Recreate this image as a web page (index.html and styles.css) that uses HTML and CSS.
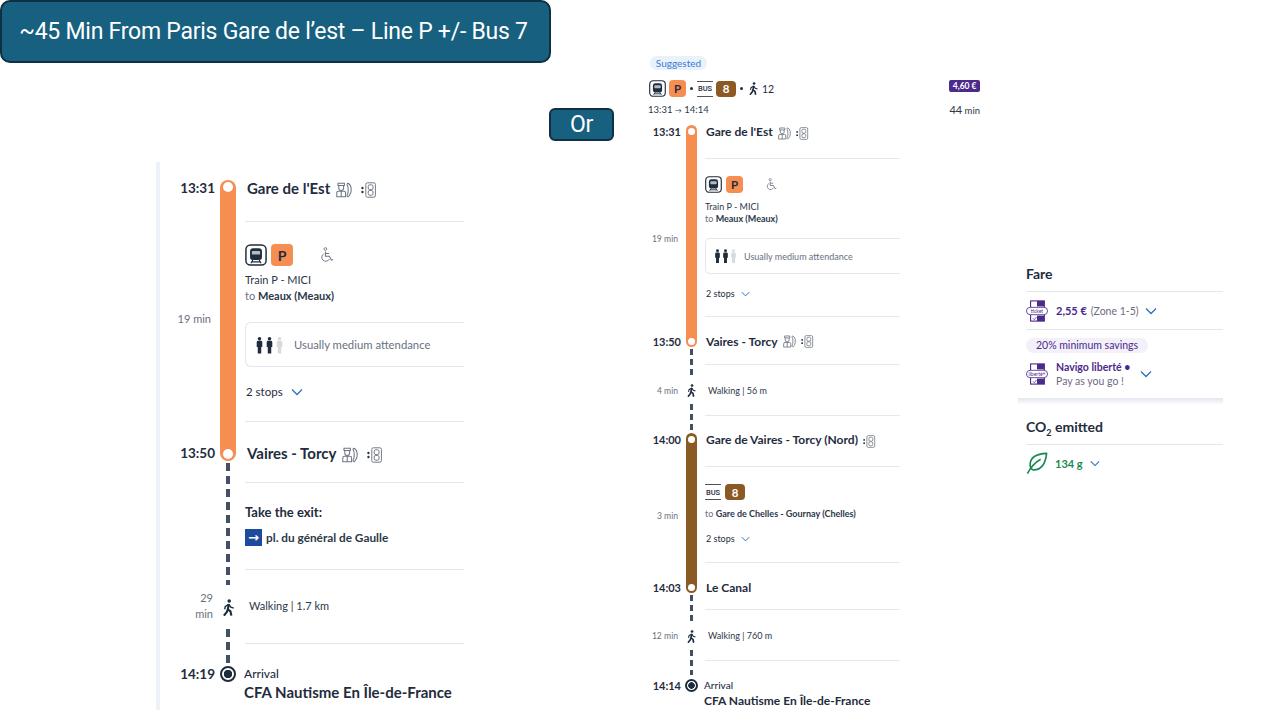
FILE: index.html
```html
<!DOCTYPE html>
<html lang="en">
  <head>
    <meta charset="UTF-8" />
    <title>Paris Gare de l'Est to CFA Nautisme</title>
    <link rel="stylesheet" href="styles.css">
  </head>
  <body>
    <svg class="sprite" xmlns="http://www.w3.org/2000/svg">
      <symbol id="i-train" viewBox="0 0 24 24">
        <rect x="1" y="1" width="22" height="22" rx="5" fill="#fff" stroke="#1f2c3d" stroke-width="1.6"/>
        <path d="M9 4.500h6a3.500 3.500 0 0 1 3.500 3.500v6.500a3 3 0 0 1-3 3h-7a3 3 0 0 1-3-3V8A3.500 3.500 0 0 1 9 4.500z" fill="#1f2c3d"/>
        <rect x="7.500" y="7.500" width="9" height="4" rx="1" fill="#b4bac3"/>
        <path d="M8.500 17.500l-2 3.500M15.500 17.500l2 3.500M7.500 19.500h9" stroke="#1f2c3d" stroke-width="1.300" fill="none"/>
      </symbol>
      <symbol id="i-walk" viewBox="0 0 24 24">
        <circle cx="13" cy="2.800" r="2.500" fill="currentColor"/>
        <path d="M12.500 7L11 14.500l3.800 3 1.200 6M11 14.500L9.500 18.500 5.500 23.500" fill="none" stroke="currentColor" stroke-width="3" stroke-linejoin="round"/>
        <path d="M12.500 7.500L7.500 10.500l-1 4M12.500 7.500l2.800 4 4 1.500" fill="none" stroke="currentColor" stroke-width="2"/>
      </symbol>
      <symbol id="i-staff" viewBox="0 0 20 20">
        <g fill="none" stroke="#6d7480" stroke-width="1.300">
          <path d="M2.500 1.500h8v3h-8zM3.500 4.500v3a3 3 0 0 0 6 0v-3"/>
          <path d="M1 18.500v-5a2 2 0 0 1 2-2h7a2 2 0 0 1 2 2v5zM6.500 11.500v7"/>
          <path d="M15 1.500c3 1.500 4 4.500 4 8s-1 6.500-4 9c-1.500-.5-1.500-2.500-.5-3.500 1-2 1-8 0-10.500-1-1-1-2.500.5-3z"/>
        </g>
      </symbol>
      <symbol id="i-lift" viewBox="0 0 20 20">
        <circle cx="1.800" cy="7.500" r="1.500" fill="#2c3848"/>
        <circle cx="1.800" cy="12.500" r="1.500" fill="#2c3848"/>
        <g fill="none" stroke="#6d7480" stroke-width="1.200">
          <rect x="6" y="1" width="12" height="18" rx="2"/>
          <rect x="9" y="3.500" width="6" height="6" rx="2"/>
          <rect x="9" y="10.500" width="6" height="6" rx="2"/>
        </g>
      </symbol>
      <symbol id="i-wheel" viewBox="0 0 20 20">
        <circle cx="8" cy="2.500" r="1.700" fill="none" stroke="#6d7480" stroke-width="1.100"/>
        <path d="M8 5.500v6h5l2.500 5 2-.8M8 8h4.500" fill="none" stroke="#6d7480" stroke-width="1.300"/>
        <path d="M6 8.500a5 5 0 1 0 7 6.500" fill="none" stroke="#6d7480" stroke-width="1.200"/>
      </symbol>
      <symbol id="i-person" viewBox="0 0 10 24">
        <circle cx="5" cy="3" r="2.500" fill="currentColor"/>
        <path d="M1 8a2 2 0 0 1 2-2h4a2 2 0 0 1 2 2v7H7.500v9h-5v-9H1z" fill="currentColor"/>
      </symbol>
      <symbol id="i-chevron" viewBox="0 0 12 8">
        <path d="M1 1.500l5 5 5-5" fill="none" stroke="#2f6fc0" stroke-width="1.300"/>
      </symbol>
      <symbol id="i-leaf" viewBox="0 0 24 24">
        <path d="M22.500 1.500C12 2 5 5 4.500 13c-.2 3 1 5.500 3 6.500 8 .5 13.500-5 15-18z" fill="none" stroke="#1c8a50" stroke-width="1.800" stroke-linejoin="round"/>
        <path d="M1.500 23.500C5 17 9 12 16 8" fill="none" stroke="#1c8a50" stroke-width="1.800"/>
      </symbol>
    </svg>

    <div class="slide">
      <h1 class="banner banner-title">~45 Min From Paris Gare de l’est – Line P +/- Bus 7</h1>
      <div class="banner banner-or">Or</div>

      <!-- left screenshot -->
      <section class="journey journey-big">
        <div class="leg leg-p">
          <div class="track track-orange"><span class="dot"></span><span class="dot"></span></div>
          <div class="time">13:31</div>
          <div class="cell cell-name ruled">
            <span class="stop-name">Gare de l'Est</span>
            <svg class="icon-staff"><use href="#i-staff"/></svg>
            <svg class="icon-lift"><use href="#i-lift"/></svg>
          </div>
          <div class="time time-span">19 min</div>
          <div class="cell ruled ride">
            <div class="line-badges">
              <svg class="icon-train"><use href="#i-train"/></svg>
              <span class="badge badge-p">P</span>
              <svg class="icon-wheel"><use href="#i-wheel"/></svg>
            </div>
            <div class="ride-text">Train P - MICI<br><span class="to">to</span> <b>Meaux (Meaux)</b></div>
            <div class="attendance">
              <svg class="icon-person"><use href="#i-person"/></svg>
              <svg class="icon-person"><use href="#i-person"/></svg>
              <svg class="icon-person person-off"><use href="#i-person"/></svg>
              <span>Usually medium attendance</span>
            </div>
            <div class="stops">2 stops <svg class="icon-chevron"><use href="#i-chevron"/></svg></div>
          </div>
          <div class="time time-end">13:50</div>
          <div class="cell cell-name cell-end">
            <span class="stop-name">Vaires - Torcy</span>
            <svg class="icon-staff"><use href="#i-staff"/></svg>
            <svg class="icon-lift"><use href="#i-lift"/></svg>
          </div>
        </div>

        <div class="leg leg-walk-exit">
          <div class="track-walk">
            <span class="dashes dashes-a"></span>
            <svg class="icon-walk"><use href="#i-walk"/></svg>
            <span class="dashes dashes-b"></span>
          </div>
          <div class="cell ruled"></div>
          <div class="cell ruled exit">
            <div class="exit-title">Take the exit:</div>
            <div class="exit-way"><span class="exit-arrow">→</span> pl. du général de Gaulle</div>
          </div>
          <div class="time time-span time-walk">29<br>min</div>
          <div class="cell ruled walking">Walking | 1.7 km</div>
        </div>

        <div class="arrival">
          <div class="time">14:19</div>
          <span class="target"></span>
          <div class="arrival-text">
            <div class="arrival-label">Arrival</div>
            <div class="arrival-place">CFA Nautisme En Île-de-France</div>
          </div>
        </div>
      </section>

      <!-- middle screenshot -->
      <section class="journey journey-small">
        <span class="suggested">Suggested</span>
        <div class="summary">
          <svg class="icon-train"><use href="#i-train"/></svg>
          <span class="badge badge-p">P</span>
          <span class="sep"></span>
          <span class="bus-mark">BUS</span>
          <span class="badge badge-8">8</span>
          <span class="sep"></span>
          <svg class="icon-walk-head"><use href="#i-walk"/></svg>
          <span class="walk-min">12</span>
          <span class="price">4,60 €</span>
        </div>
        <div class="hours">
          <span>13:31 <span class="hours-arrow">→</span> 14:14</span>
          <span><b class="total">44</b> min</span>
        </div>

        <div class="leg leg-p">
          <div class="track track-orange"><span class="dot"></span><span class="dot"></span></div>
          <div class="time">13:31</div>
          <div class="cell cell-name ruled">
            <span class="stop-name">Gare de l'Est</span>
            <svg class="icon-staff"><use href="#i-staff"/></svg>
            <svg class="icon-lift"><use href="#i-lift"/></svg>
          </div>
          <div class="time time-span">19 min</div>
          <div class="cell ruled ride">
            <div class="line-badges">
              <svg class="icon-train"><use href="#i-train"/></svg>
              <span class="badge badge-p">P</span>
              <svg class="icon-wheel"><use href="#i-wheel"/></svg>
            </div>
            <div class="ride-text">Train P - MICI<br><span class="to">to</span> <b>Meaux (Meaux)</b></div>
            <div class="attendance">
              <svg class="icon-person"><use href="#i-person"/></svg>
              <svg class="icon-person"><use href="#i-person"/></svg>
              <svg class="icon-person person-off"><use href="#i-person"/></svg>
              <span>Usually medium attendance</span>
            </div>
            <div class="stops">2 stops <svg class="icon-chevron"><use href="#i-chevron"/></svg></div>
          </div>
          <div class="time time-end">13:50</div>
          <div class="cell cell-name cell-end">
            <span class="stop-name">Vaires - Torcy</span>
            <svg class="icon-staff"><use href="#i-staff"/></svg>
            <svg class="icon-lift"><use href="#i-lift"/></svg>
          </div>
        </div>

        <div class="leg leg-walk-a">
          <div class="track-walk">
            <span class="dashes dashes-a"></span>
            <svg class="icon-walk"><use href="#i-walk"/></svg>
            <span class="dashes dashes-b"></span>
          </div>
          <div class="cell ruled"></div>
          <div class="time time-span">4 min</div>
          <div class="cell ruled walking">Walking | 56 m</div>
        </div>

        <div class="leg leg-bus">
          <div class="track track-brown"><span class="dot"></span><span class="dot"></span></div>
          <div class="time">14:00</div>
          <div class="cell cell-name ruled">
            <span class="stop-name">Gare de Vaires - Torcy (Nord)</span>
            <svg class="icon-lift"><use href="#i-lift"/></svg>
          </div>
          <div class="time time-span">3 min</div>
          <div class="cell ruled ride">
            <div class="line-badges">
              <span class="bus-mark">BUS</span>
              <span class="badge badge-8">8</span>
            </div>
            <div class="ride-text"><span class="to">to</span> <b>Gare de Chelles - Gournay (Chelles)</b></div>
            <div class="stops">2 stops <svg class="icon-chevron"><use href="#i-chevron"/></svg></div>
          </div>
          <div class="time time-end">14:03</div>
          <div class="cell cell-name cell-end">
            <span class="stop-name">Le Canal</span>
          </div>
        </div>

        <div class="leg leg-walk-b">
          <div class="track-walk">
            <span class="dashes dashes-a"></span>
            <svg class="icon-walk"><use href="#i-walk"/></svg>
            <span class="dashes dashes-b"></span>
          </div>
          <div class="cell ruled"></div>
          <div class="time time-span">12 min</div>
          <div class="cell ruled walking">Walking | 760 m</div>
        </div>

        <div class="arrival">
          <div class="time">14:14</div>
          <span class="target"></span>
          <div class="arrival-text">
            <div class="arrival-label">Arrival</div>
            <div class="arrival-place">CFA Nautisme En Île-de-France</div>
          </div>
        </div>
      </section>

      <!-- right screenshot -->
      <aside class="fare">
        <h2 class="fare-title">Fare</h2>
        <div class="fare-row fare-ticket">
          <svg class="icon-pass" viewBox="0 0 24 24">
            <rect x="5" y="1" width="15" height="22" fill="none" stroke="#4b2a8a" stroke-width="1.200"/>
            <rect x="12" y="1" width="8" height="6" fill="#4b2a8a"/>
            <rect x="12" y="17" width="8" height="6" fill="#4b2a8a"/>
            <path d="M7.500 20l1.500 1.500 2.500-3" fill="none" stroke="#4b2a8a" stroke-width=".8"/>
            <rect x=".5" y="8" width="23" height="8" rx="4" fill="#fff" stroke="#4b2a8a" stroke-width=".9"/>
            <text x="12" y="14" text-anchor="middle" class="pass-text">ticket</text>
          </svg>
          <b class="fare-price">2,55 €</b>
          <span class="fare-note">(Zone 1-5)</span>
          <svg class="icon-chevron"><use href="#i-chevron"/></svg>
        </div>
        <div class="fare-offer">
          <span class="savings">20% minimum savings</span>
          <div class="fare-row">
            <svg class="icon-pass" viewBox="0 0 24 24">
              <rect x="5" y="1" width="15" height="22" fill="none" stroke="#4b2a8a" stroke-width="1.200"/>
              <rect x="12" y="1" width="8" height="6" fill="#4b2a8a"/>
              <rect x="12" y="17" width="8" height="6" fill="#4b2a8a"/>
              <path d="M7.500 20l1.500 1.500 2.500-3" fill="none" stroke="#4b2a8a" stroke-width=".8"/>
              <rect x=".5" y="8" width="23" height="8" rx="4" fill="#fff" stroke="#4b2a8a" stroke-width=".9"/>
              <text x="12" y="14" text-anchor="middle" class="pass-text">liberté+</text>
            </svg>
            <div class="navigo"><b>Navigo liberté •</b><br><span>Pay as you go !</span></div>
            <svg class="icon-chevron"><use href="#i-chevron"/></svg>
          </div>
        </div>
        <div class="fare-band"></div>
        <h2 class="fare-title co2-title">CO<sub>2</sub> emitted</h2>
        <div class="co2-row">
          <svg class="icon-leaf"><use href="#i-leaf"/></svg>
          <b>134 g</b>
          <svg class="icon-chevron"><use href="#i-chevron"/></svg>
        </div>
      </aside>
    </div>
  </body>
</html>
```

FILE: styles.css
```css
* {
  box-sizing: border-box;
  margin: 0;
  padding: 0;
}
body {
  background: #fff;
  color: #1f2c3d;
  font-family: "Lato", "Liberation Sans", sans-serif;
  overflow: hidden;
}
.sprite {
  display: none;
}
svg {
  display: block;
  flex: none;
}
.slide {
  position: relative;
  width: 1280px;
  height: 720px;
  overflow: hidden;
}

/* slide banners */
.banner {
  position: absolute;
  display: flex;
  align-items: center;
  justify-content: center;
  background: #17607f;
  border: 2px solid #0e2f44;
  color: #fff;
  font-family: "Roboto", "Liberation Sans", sans-serif;
  font-weight: 400;
  font-size: 23px;
  letter-spacing: -0.25px;
}
.banner-title {
  left: 0;
  top: 0;
  width: 551px;
  height: 63px;
  padding-right: 4px;
  border-radius: 10px;
}
.banner-or {
  left: 549px;
  top: 108px;
  width: 65px;
  height: 33px;
  border-radius: 6px;
}

/* the journeys */
.journey {
  position: absolute;
}
.journey-big {
  left: 156px;
  top: 162px;
  width: 308px;
  height: 548px;
  padding-top: 18px;
  border-left: 4px solid #edf1f8;
  --time-w: 60px;
  --line-w: 16px;
  --body-pad: 9px;
  --name: 15px;
  --time: 13.500px;
  --small: 11px;
  --text: 11px;
  --rule: #e3e6ea;
}
.journey-small {
  left: 648px;
  top: 56px;
  width: 332px;
  --time-w: 38px;
  --line-w: 11px;
  --body-pad: 8px;
  --name: 12px;
  --time: 11px;
  --small: 9px;
  --text: 9px;
  --rule: #e6e8ec;
}
.leg {
  display: grid;
  grid-template-columns: var(--time-w) var(--line-w) 1fr;
}
.journey-small .leg {
  width: 252px;
}
.journey-big .leg-p { grid-template-rows: 42px 200px 39px; }
.journey-big .leg-walk-exit { grid-template-rows: 22px 87px 74px 22px; }
.journey-small .leg-p { grid-template-rows: 34px 158px 30px; }
.journey-small .leg-walk-a { grid-template-rows: 18px 51px 17px; }
.journey-small .leg-bus { grid-template-rows: 34px 96px 30px; }
.journey-small .leg-walk-b { grid-template-rows: 17px 51px 16px; }

.track {
  grid-column: 2;
  grid-row: 1 / span 3;
  display: flex;
  flex-direction: column;
  justify-content: space-between;
  align-items: center;
  border-radius: 8px;
  padding: 2px 0;
}
.journey-small .track {
  padding: 3px 0 2px;
}
.track-orange { background: #f68d51; }
.track-brown { background: #8b5a24; }
.dot {
  width: 10px;
  height: 10px;
  border-radius: 50%;
  background: #fff;
}
.journey-small .dot {
  width: 7px;
  height: 7px;
}
.time {
  grid-column: 1;
  padding-right: 5px;
  text-align: right;
  font-size: var(--time);
  font-weight: 700;
  line-height: 16px;
}
.journey-small .time {
  line-height: 12px;
  padding-top: 1px;
}
.time-span {
  align-self: center;
  font-size: var(--small);
  font-weight: 400;
  color: #687180;
}
.journey-big .time-span {
  padding-right: 9px;
  margin-bottom: 6px;
}
.journey-small .time-span {
  padding-right: 8px;
  font-size: 8.600px;
}
.journey-big .time-walk {
  align-self: end;
  margin-bottom: 0;
  padding: 0 7px 22px 0;
}
.time-end {
  align-self: end;
}
.journey-small .time-end {
  line-height: 10px;
}
.cell {
  grid-column: 3;
  margin-left: var(--body-pad);
}
.ruled {
  border-bottom: 1px solid var(--rule);
}
.cell-name {
  display: flex;
  align-items: flex-start;
  padding-left: 2px;
}
.journey-small .cell-name {
  padding-left: 1px;
  padding-top: 1px;
}
.cell-end {
  align-items: flex-end;
}
.stop-name {
  font-size: var(--name);
  font-weight: 700;
  line-height: 16px;
  white-space: nowrap;
}
.journey-small .stop-name { line-height: 12px; }
.journey-small .cell-end .stop-name { line-height: 10px; }
.icon-staff {
  width: 16px;
  height: 16px;
  margin: 2px 0 0 6px;
}
.icon-lift {
  width: 16px;
  height: 16px;
  margin: 2px 0 0 9px;
}
.cell-end .icon-staff,
.cell-end .icon-lift {
  margin-top: 0;
  margin-bottom: -2px;
}
.journey-small .icon-staff,
.journey-small .icon-lift {
  width: 13px;
  height: 13px;
  margin-left: 5px;
  margin-top: 1px;
}
.journey-small .cell-end .icon-staff,
.journey-small .cell-end .icon-lift {
  margin-top: 0;
  margin-bottom: -1px;
}

.ride {
  display: flex;
  flex-direction: column;
}
.line-badges {
  display: flex;
  align-items: center;
  gap: 4px;
}
.journey-big .line-badges { margin-top: 22px; }
.journey-small .line-badges { margin-top: 17px; }
.icon-train {
  width: 22px;
  height: 22px;
}
.journey-small .icon-train {
  width: 17px;
  height: 17px;
}
.badge {
  display: flex;
  align-items: center;
  justify-content: center;
  border-radius: 4px;
  font-weight: 700;
}
.badge-p {
  width: 22px;
  height: 22px;
  background: #f68d51;
  color: #1f2c3d;
  font-size: 14px;
}
.journey-small .badge-p {
  width: 17px;
  height: 17px;
  font-size: 11.500px;
}
.badge-8 {
  width: 20px;
  height: 16px;
  background: #8b5a24;
  color: #fff;
  font-size: 11.500px;
}
.bus-mark {
  display: flex;
  align-items: center;
  justify-content: center;
  width: 16px;
  height: 16px;
  border-top: 1px solid #555;
  border-bottom: 1px solid #555;
  font-family: "Roboto", sans-serif;
  font-size: 7.500px;
  font-weight: 500;
}
.icon-wheel {
  width: 16px;
  height: 16px;
  margin-left: 22px;
}
.journey-small .icon-wheel {
  width: 13px;
  height: 13px;
  margin-left: 18px;
}
.ride-text {
  font-size: var(--text);
  color: #2c3848;
}
.journey-big .ride-text {
  margin-top: 6px;
  line-height: 16px;
}
.journey-small .ride-text {
  margin-top: 8px;
  line-height: 12px;
}
.to { color: #687180; }
.attendance {
  display: flex;
  align-items: center;
  border: 1px solid #e3e6ea;
  border-right: none;
  color: #687180;
}
.journey-big .attendance {
  height: 45px;
  margin-top: 18px;
  padding-left: 10px;
  border-radius: 6px 0 0 6px;
  font-size: 11.300px;
}
.journey-small .attendance {
  height: 36px;
  margin-top: 13px;
  padding-left: 8px;
  border-radius: 5px 0 0 5px;
  font-size: 9px;
}
.icon-person {
  width: 7px;
  height: 18px;
  margin-right: 3px;
  color: #1f2c3d;
}
.person-off {
  color: #d8dadd;
  margin-right: 11px;
}
.journey-small .icon-person {
  width: 7px;
  height: 14px;
  margin-right: 1px;
}
.journey-small .person-off { margin-right: 7px; }
.stops {
  display: flex;
  align-items: center;
  font-size: var(--small);
  padding-left: 1px;
}
.journey-big .stops {
  margin-top: 18px;
  gap: 8px;
  font-size: 11.500px;
}
.journey-small .stops {
  margin-top: 14px;
  gap: 6px;
}
.journey-small .leg-bus .stops { margin-top: 13px; }
.icon-chevron {
  width: 12px;
  height: 8px;
}
.journey-small .icon-chevron {
  width: 9px;
  height: 6px;
}

/* dotted walking part */
.track-walk {
  grid-column: 2;
  grid-row: 1 / -1;
  display: flex;
  flex-direction: column;
  align-items: center;
  justify-content: space-between;
  padding: 2px 0;
  color: #1f2c3d;
}
.dashes {
  width: 4px;
  background: repeating-linear-gradient(#425063 0 8px, transparent 8px 13px);
}
.journey-small .dashes {
  width: 3px;
  background: repeating-linear-gradient(#425063 0 6.500px, transparent 6.500px 10px);
}
.journey-big .dashes-a { height: 122px; }
.journey-big .dashes-b { height: 35px; }
.journey-big .icon-walk {
  width: 17px;
  height: 17px;
}
.journey-small .icon-walk {
  width: 13px;
  height: 13px;
}
.journey-small .leg-walk-a .dashes-a { height: 27px; }
.journey-small .leg-walk-a .dashes-b { height: 27px; }
.journey-small .leg-walk-b .dashes-a { height: 27px; }
.journey-small .leg-walk-b .dashes-b { height: 25px; }
.walking {
  display: flex;
  align-items: center;
  padding-left: 4px;
  font-size: var(--small);
  color: #2c3848;
}
.journey-big .walking { padding-bottom: 2px; }
.journey-small .walking { padding-left: 3px; }
.exit-title {
  margin-top: 21px;
  font-size: 13px;
  font-weight: 700;
  line-height: 16px;
}
.exit-way {
  display: flex;
  align-items: center;
  gap: 4px;
  margin-top: 9px;
  font-size: 11.800px;
  font-weight: 700;
  color: #2c3848;
}
.exit-arrow {
  display: flex;
  align-items: center;
  justify-content: center;
  width: 17px;
  height: 17px;
  background: #1c4a9c;
  color: #fff;
  font-family: "DejaVu Sans", sans-serif;
  font-size: 13px;
}

/* arrival */
.arrival {
  display: grid;
  grid-template-columns: var(--time-w) var(--line-w) 1fr;
  align-items: start;
}
.journey-small .arrival {
  width: 252px;
  margin-top: 2px;
}
.target {
  grid-column: 2;
  justify-self: center;
  width: 16px;
  height: 16px;
  border-radius: 50%;
  border: 2px solid #1f2c3d;
  background: radial-gradient(#1f2c3d 0 4px, #fff 4.500px);
}
.journey-small .target {
  width: 13px;
  height: 13px;
  background: radial-gradient(#1f2c3d 0 3px, #fff 3.500px);
}
.arrival-text {
  grid-column: 3;
  margin-left: 8px;
}
.journey-small .arrival-text { margin-left: 7px; }
.arrival-label {
  font-size: 12px;
  font-weight: 500;
  line-height: 16px;
}
.journey-small .arrival-label {
  font-size: 10px;
  line-height: 12px;
}
.arrival-place {
  font-size: 15px;
  font-weight: 700;
  line-height: 20px;
}
.journey-small .arrival-place {
  font-size: 12px;
  line-height: 19px;
}

/* summary above the middle journey */
.suggested {
  display: block;
  width: 57px;
  height: 14px;
  margin-left: 2px;
  border-radius: 7px;
  background: #e9f2fb;
  color: #3a7bd0;
  font-size: 10px;
  line-height: 14px;
  text-align: center;
}
.summary {
  display: flex;
  align-items: center;
  gap: 3px;
  height: 17px;
  margin-top: 10px;
  margin-left: 1px;
}
.sep {
  width: 3px;
  height: 3px;
  margin: 0 1px;
  border-radius: 50%;
  background: #1f2c3d;
}
.icon-walk-head {
  width: 13px;
  height: 13px;
}
.walk-min {
  margin-left: -1px;
  font-size: 10.500px;
}
.price {
  margin-left: auto;
  align-self: flex-start;
  padding: 0 3.500px;
  background: #4b2a8a;
  border-radius: 2px;
  color: #fff;
  font-size: 8.500px;
  font-weight: 700;
  line-height: 12px;
}
.hours {
  display: flex;
  justify-content: space-between;
  height: 12px;
  margin-top: 7px;
  margin-bottom: 9px;
  font-size: 9.500px;
  line-height: 12px;
  color: #2c3848;
}
.hours-arrow {
  font-size: 7px;
}
.total {
  font-size: 11px;
  font-weight: 400;
}

/* fare column */
.fare {
  position: absolute;
  left: 1018px;
  top: 266px;
  width: 205px;
}
.fare-title {
  margin-left: 8px;
  height: 26px;
  border-bottom: 1px solid #e3e6ea;
  font-size: 14px;
  font-weight: 700;
  line-height: 16px;
}
.fare-row {
  display: flex;
  align-items: center;
  margin-left: 8px;
}
.fare-ticket {
  height: 38px;
  border-bottom: 1px solid #e3e6ea;
  font-size: 10.500px;
}
.icon-pass {
  width: 22px;
  height: 22px;
  margin-right: 8px;
}
.pass-text {
  font-size: 5.500px;
  fill: #4b2a8a;
}
.fare-price {
  color: #4b2a8a;
  font-size: 11px;
}
.fare-note {
  margin: 0 6px 0 4px;
  color: #706a80;
}
.fare-offer {
  height: 68px;
  padding-top: 8px;
}
.savings {
  display: block;
  width: 122px;
  height: 15px;
  margin: 0 0 7px 8px;
  border-radius: 8px;
  background: #f3f0fa;
  color: #4b2a8a;
  font-size: 10.500px;
  line-height: 15px;
  text-align: center;
}
.navigo {
  margin-right: 10px;
  font-size: 10.500px;
  line-height: 14px;
  color: #706a80;
}
.navigo b {
  color: #4b2a8a;
}
.fare-band {
  height: 7px;
  background: linear-gradient(#e1e7f0, #fff);
}
.co2-title {
  margin-top: 14px;
  height: 26px;
}
sub {
  font-size: 9px;
  line-height: 0;
}
.co2-row {
  display: flex;
  align-items: center;
  gap: 7px;
  height: 36px;
  margin-left: 8px;
  color: #1c8a50;
  font-size: 11px;
}
.co2-row .icon-chevron {
  width: 10px;
  height: 7px;
}
.icon-leaf {
  width: 22px;
  height: 22px;
}
```
